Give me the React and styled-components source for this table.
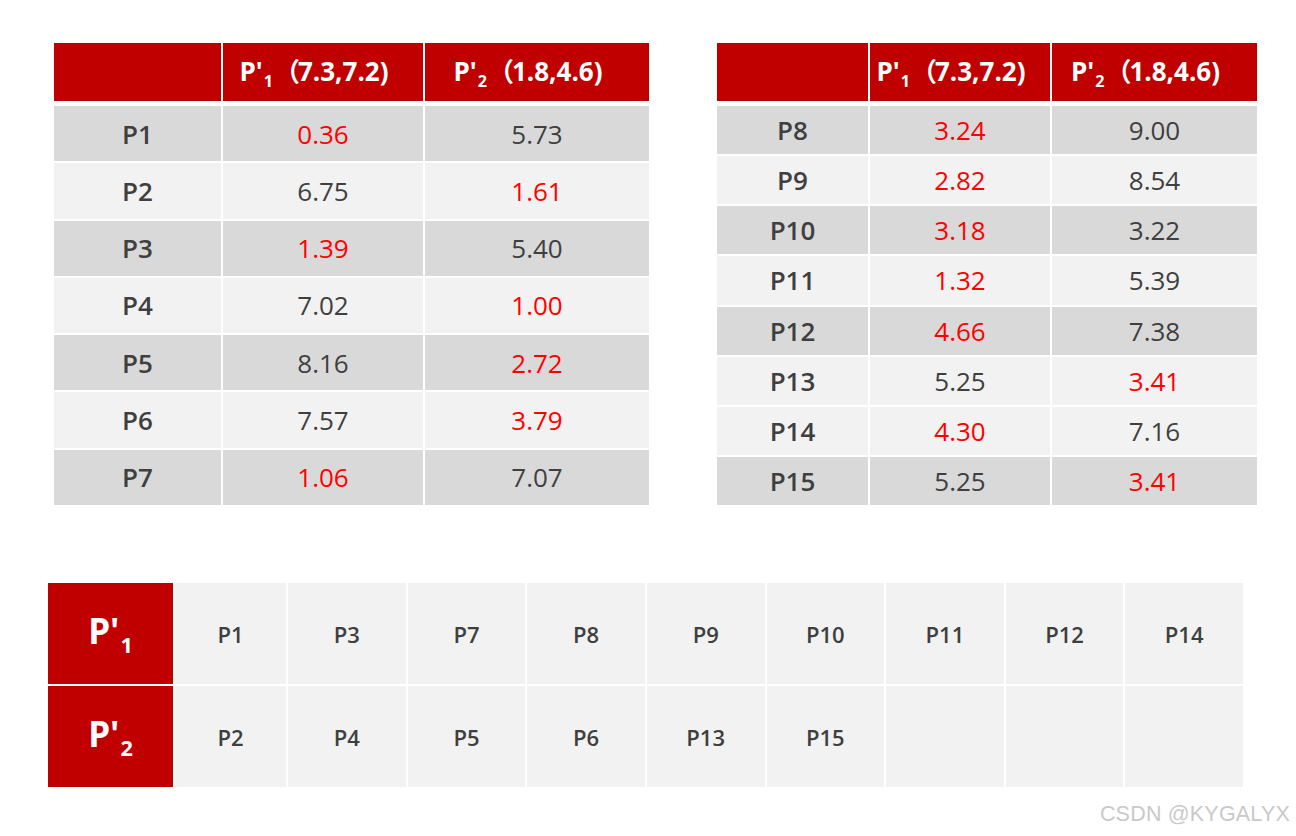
import React from "react";
import styled, { createGlobalStyle } from "styled-components";

const Global = createGlobalStyle`
  html, body { margin: 0; padding: 0; background: #ffffff; }
  body { font-family: "Open Sans", "Noto Sans", sans-serif; }
`;

const RED = "#c00000";
const DARK = "#d9d9d9";
const LIGHT = "#f2f2f2";

const Page = styled.div`
  position: relative;
  width: 1296px;
  height: 836px;
  padding-top: 43px;
  box-sizing: border-box;
`;

const TopRow = styled.div`
  display: flex;
  margin-left: 54px;
  gap: 68px;
`;

const Table = styled.div`
  display: flex;
  flex-direction: column;
  gap: 5px;
  width: ${(p) => p.$width}px;
`;

const HeadRow = styled.div`
  display: grid;
  grid-template-columns: ${(p) => p.$cols};
  column-gap: 2px;
  height: 58px;
`;

const HeadCell = styled.div`
  background: ${RED};
  color: #ffffff;
  font-weight: 700;
  font-size: 26px;
  display: flex;
  align-items: center;
  justify-content: center;
  padding-right: 18px;
  padding-bottom: 4px;
  white-space: nowrap;
`;

const Label = styled.span`
  display: inline-block;
  line-height: 1;
`;

const Body = styled.div`
  display: grid;
  grid-template-columns: ${(p) => p.$cols};
  grid-auto-rows: 1fr;
  column-gap: 2px;
  row-gap: 2px;
  height: 399px;
`;

const Cell = styled.div`
  background: ${(p) => (p.$dark ? DARK : LIGHT)};
  color: ${(p) => (p.$red ? "#ff0000" : "#3f3f3f")};
  font-size: 26px;
  font-weight: ${(p) => (p.$label ? 600 : 400)};
  display: flex;
  align-items: center;
  justify-content: center;
`;

const Sub = styled.span`
  font-size: 0.62em;
  vertical-align: -0.4em;
  line-height: 0;
  margin-left: 1px;
`;

const Paren = styled.span`
  font-family: "Noto Sans CJK SC", sans-serif;
  font-weight: 700;
  margin-left: 1px;
  margin-right: -2px;
`;

const Grid = styled.div`
  display: grid;
  grid-template-columns: 125px 111px repeat(8, 1fr);
  grid-template-rows: 101px 101px;
  gap: 2px;
  width: 1195px;
  margin-left: 48px;
  margin-top: 78px;
`;

const KeyCell = styled.div`
  background: ${RED};
  color: #ffffff;
  font-weight: 700;
  font-size: 35px;
  display: flex;
  align-items: center;
  justify-content: center;
  padding-bottom: 6px;
`;

const GridCell = styled.div`
  background: ${LIGHT};
  color: #3f3f3f;
  font-weight: 600;
  font-size: 22px;
  display: flex;
  align-items: center;
  justify-content: center;
`;

const Watermark = styled.div`
  position: absolute;
  right: 6px;
  bottom: 9px;
  font-family: "Liberation Sans", Arial, sans-serif;
  font-size: 21.5px;
  color: #c9c9c9;
  letter-spacing: 0.2px;
`;

const Header = ({ n, coords }) => (
  <HeadCell>
    <Label>
      P'<Sub>{n}</Sub>
      <Paren>（</Paren>
      {coords})
    </Label>
  </HeadCell>
);

const table1 = [
  ["P1", "0.36", "5.73", 1],
  ["P2", "6.75", "1.61", 2],
  ["P3", "1.39", "5.40", 1],
  ["P4", "7.02", "1.00", 2],
  ["P5", "8.16", "2.72", 2],
  ["P6", "7.57", "3.79", 2],
  ["P7", "1.06", "7.07", 1],
];

const table2 = [
  ["P8", "3.24", "9.00", 1],
  ["P9", "2.82", "8.54", 1],
  ["P10", "3.18", "3.22", 1],
  ["P11", "1.32", "5.39", 1],
  ["P12", "4.66", "7.38", 1],
  ["P13", "5.25", "3.41", 2],
  ["P14", "4.30", "7.16", 1],
  ["P15", "5.25", "3.41", 2],
];

const shade1 = [true, false, true, false, true, false, true];
const shade2 = [true, false, true, false, true, false, false, true];

const DataTable = ({ width, cols, rows, shade }) => (
  <Table $width={width}>
    <HeadRow $cols={cols}>
      <HeadCell />
      <Header n="1" coords="7.3,7.2" />
      <Header n="2" coords="1.8,4.6" />
    </HeadRow>
    <Body $cols={cols}>
      {rows.map(([label, a, b, which], i) => (
        <React.Fragment key={label}>
          <Cell $dark={shade[i]} $label>
            {label}
          </Cell>
          <Cell $dark={shade[i]} $red={which === 1}>
            {a}
          </Cell>
          <Cell $dark={shade[i]} $red={which === 2}>
            {b}
          </Cell>
        </React.Fragment>
      ))}
    </Body>
  </Table>
);

const group1 = ["P1", "P3", "P7", "P8", "P9", "P10", "P11", "P12", "P14"];
const group2 = ["P2", "P4", "P5", "P6", "P13", "P15", "", "", ""];

const Key = ({ n }) => (
  <KeyCell>
    <Label>
      P'<Sub>{n}</Sub>
    </Label>
  </KeyCell>
);

export default function App() {
  return (
    <>
      <Global />
      <Page>
        <TopRow>
          <DataTable width={595} cols="167px 200px 224px" rows={table1} shade={shade1} />
          <DataTable width={540} cols="151px 180px 205px" rows={table2} shade={shade2} />
        </TopRow>
        <Grid>
          <Key n="1" />
          {group1.map((p, i) => (
            <GridCell key={"a" + i}>{p}</GridCell>
          ))}
          <Key n="2" />
          {group2.map((p, i) => (
            <GridCell key={"b" + i}>{p}</GridCell>
          ))}
        </Grid>
        <Watermark>CSDN @KYGALYX</Watermark>
      </Page>
    </>
  );
}
